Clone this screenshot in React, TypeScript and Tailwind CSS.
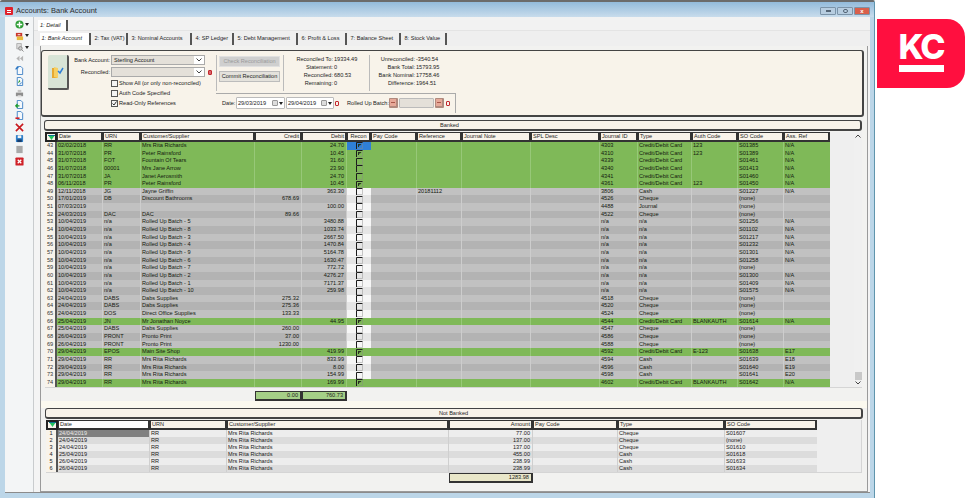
import React from 'react';

type BankedRow = {
  no: number; date: string; urn?: string; name?: string; credit?: string; debit?: string;
  recon?: boolean; ref?: string; jid: string; type: string; auth?: string; so: string; ass?: string; banked?: boolean;
};

const card = 'Credit/Debit Card';

const bankedRows: BankedRow[] = [
  { no: 43, date: '02/02/2018', urn: 'RR', name: 'Mrs Rita Richards', debit: '24.70', recon: true, jid: '4303', type: card, auth: '123', so: 'S01385', ass: 'N/A', banked: true },
  { no: 44, date: '31/07/2018', urn: 'PR', name: 'Peter Rainsford', debit: '10.45', recon: true, jid: '4310', type: card, auth: '123', so: 'S01389', ass: 'N/A', banked: true },
  { no: 45, date: '31/07/2018', urn: 'FOT', name: 'Fountain Of Tears', debit: '31.60', jid: '4339', type: card, so: 'S01461', ass: 'N/A', banked: true },
  { no: 46, date: '31/07/2018', urn: '00001', name: 'Mrs Jane Arrow', debit: '23.90', jid: '4340', type: card, so: 'S01413', ass: 'N/A', banked: true },
  { no: 47, date: '31/07/2018', urn: 'JA', name: 'Janet Aerosmith', debit: '24.70', jid: '4341', type: card, so: 'S01460', ass: 'N/A', banked: true },
  { no: 48, date: '06/11/2018', urn: 'PR', name: 'Peter Rainsford', debit: '10.45', recon: true, jid: '4361', type: card, auth: '123', so: 'S01450', ass: 'N/A', banked: true },
  { no: 49, date: '12/11/2018', urn: 'JG', name: 'Jayne Griffin', debit: '363.30', ref: '20181112', jid: '3806', type: 'Cash', so: 'S01227', ass: 'N/A' },
  { no: 50, date: '17/01/2019', urn: 'DB', name: 'Discount Bathrooms', credit: '678.69', jid: '4526', type: 'Cheque', so: '(none)' },
  { no: 51, date: '07/03/2019', debit: '100.00', jid: '4488', type: 'Journal', so: '(none)' },
  { no: 52, date: '24/03/2019', urn: 'DAC', name: 'DAC', credit: '89.66', jid: '4522', type: 'Cheque', so: '(none)' },
  { no: 53, date: '10/04/2019', urn: 'n/a', name: 'Rolled Up Batch - 5', debit: '3480.88', jid: 'n/a', type: 'n/a', so: 'S01256', ass: 'N/A' },
  { no: 54, date: '10/04/2019', urn: 'n/a', name: 'Rolled Up Batch - 8', debit: '1033.74', jid: 'n/a', type: 'n/a', so: 'S01102', ass: 'N/A' },
  { no: 55, date: '10/04/2019', urn: 'n/a', name: 'Rolled Up Batch - 3', debit: '2667.50', jid: 'n/a', type: 'n/a', so: 'S01217', ass: 'N/A' },
  { no: 56, date: '10/04/2019', urn: 'n/a', name: 'Rolled Up Batch - 4', debit: '1470.84', jid: 'n/a', type: 'n/a', so: 'S01232', ass: 'N/A' },
  { no: 57, date: '10/04/2019', urn: 'n/a', name: 'Rolled Up Batch - 9', debit: '5164.78', jid: 'n/a', type: 'n/a', so: 'S01301', ass: 'N/A' },
  { no: 58, date: '10/04/2019', urn: 'n/a', name: 'Rolled Up Batch - 6', debit: '1630.47', jid: 'n/a', type: 'n/a', so: 'S01258', ass: 'N/A' },
  { no: 59, date: '10/04/2019', urn: 'n/a', name: 'Rolled Up Batch - 7', debit: '772.72', jid: 'n/a', type: 'n/a', so: '(none)' },
  { no: 60, date: '10/04/2019', urn: 'n/a', name: 'Rolled Up Batch - 2', debit: '4276.27', jid: 'n/a', type: 'n/a', so: 'S01300', ass: 'N/A' },
  { no: 61, date: '10/04/2019', urn: 'n/a', name: 'Rolled Up Batch - 1', debit: '7171.37', jid: 'n/a', type: 'n/a', so: 'S01409', ass: 'N/A' },
  { no: 62, date: '10/04/2019', urn: 'n/a', name: 'Rolled Up Batch - 10', debit: '259.98', jid: 'n/a', type: 'n/a', so: 'S01575', ass: 'N/A' },
  { no: 63, date: '24/04/2019', urn: 'DABS', name: 'Dabs Supplies', credit: '275.32', jid: '4518', type: 'Cheque', so: '(none)' },
  { no: 64, date: '24/04/2019', urn: 'DABS', name: 'Dabs Supplies', credit: '275.36', jid: '4520', type: 'Cheque', so: '(none)' },
  { no: 65, date: '24/04/2019', urn: 'DOS', name: 'Direct Office Supplies', credit: '133.33', jid: '4524', type: 'Cheque', so: '(none)' },
  { no: 66, date: '25/04/2019', urn: 'JN', name: 'Mr Jonathan Noyce', debit: '44.95', recon: true, jid: '4544', type: card, auth: 'BLANKAUTH', so: 'S01614', ass: 'N/A', banked: true },
  { no: 67, date: '25/04/2019', urn: 'DABS', name: 'Dabs Supplies', credit: '260.00', jid: '4547', type: 'Cheque', so: '(none)' },
  { no: 68, date: '26/04/2019', urn: 'PRONT', name: 'Pronto Print', credit: '37.00', jid: '4586', type: 'Cheque', so: '(none)' },
  { no: 69, date: '26/04/2019', urn: 'PRONT', name: 'Pronto Print', credit: '1230.00', jid: '4588', type: 'Cheque', so: '(none)' },
  { no: 70, date: '29/04/2019', urn: 'EPOS', name: 'Main Site Shop', debit: '419.99', recon: true, jid: '4592', type: card, auth: 'E-123', so: 'S01638', ass: 'E17', banked: true },
  { no: 71, date: '29/04/2019', urn: 'RR', name: 'Mrs Rita Richards', debit: '833.99', jid: '4594', type: 'Cash', so: 'S01639', ass: 'E18' },
  { no: 72, date: '29/04/2019', urn: 'RR', name: 'Mrs Rita Richards', debit: '8.00', jid: '4596', type: 'Cash', so: 'S01640', ass: 'E19' },
  { no: 73, date: '29/04/2019', urn: 'RR', name: 'Mrs Rita Richards', debit: '154.99', jid: '4598', type: 'Cash', so: 'S01641', ass: 'E20' },
  { no: 74, date: '29/04/2019', urn: 'RR', name: 'Mrs Rita Richards', debit: '169.99', recon: true, jid: '4602', type: card, auth: 'BLANKAUTH', so: 'S01642', ass: 'N/A', banked: true },
];

const notBanked = [
  ['24/04/2019', '77.00', 'Cheque', 'S01607'],
  ['24/04/2019', '137.00', 'Cheque', '(none)'],
  ['24/04/2019', '137.00', 'Cheque', 'S01610'],
  ['25/04/2019', '455.00', 'Cash', 'S01618'],
  ['26/04/2019', '238.99', 'Cash', 'S01633'],
  ['26/04/2019', '238.99', 'Cash', 'S01634'],
];

const bankedCols = 'grid w-[785px] grid-cols-[12px_46px_38px_114px_47px_45px_24px_46px_45px_69px_69px_38px_54px_46px_46px_46px]';
const notBankedCols = 'grid w-[771px] grid-cols-[12px_92px_77px_222px_84px_85px_107px_92px]';

const topTabs = [
  ['1: Bank Account', 'w-[51px]'],
  ['2: Tax (VAT)', 'w-[35px]'],
  ['3: Nominal Accounts', 'w-[62px]'],
  ['4: SP Ledger', 'w-[40px]'],
  ['5: Debt Management', 'w-[62px]'],
  ['6: Profit & Loss', 'w-[47px]'],
  ['7: Balance Sheet', 'w-[52px]'],
  ['8: Stock Value', 'w-[44px]'],
];

const SortArrow = () => (
  <svg width="7" height="5" viewBox="0 0 7 5"><path d="M0 0h7L3.5 5z" fill="#22c55e" /><path d="M0 0h7v1H0z" fill="#0e7490" /></svg>
);

const HeadCell = ({ label, right, white, center }: { label?: string; right?: boolean; white?: boolean; center?: boolean }) => (
  <div className={`h-full border border-r-2 border-b-2 border-[#333] ${white ? 'bg-white' : 'bg-[#f8f3ea]'} px-px truncate leading-[7px] ${right ? 'text-right' : ''} ${center ? 'text-center' : ''}`}>
    {label}
  </div>
);

const SelectorHead = () => (
  <div className="h-full border-2 border-[#222] bg-[#f8f3ea] flex items-center justify-center"><SortArrow /></div>
);

const Tick = ({ on }: { on?: boolean }) => (
  <svg width="7" height="7" viewBox="0 0 7 7" className="block">
    <path d="M6.500 1V6.500H1" fill="none" stroke="#8a8a8a" strokeOpacity=".45" strokeWidth="1" />
    <path d="M.5 7V.5H6.500" fill="none" stroke="#1c1c1c" strokeWidth="1" />
    {on && <path d="M2 2h3.500L4 3.500H3V5H2z" fill="#26331f" />}
  </svg>
);

const Cell = ({ children, right, sep }: { children?: React.ReactNode; right?: boolean; sep: string }) => (
  <div className={`h-full border-r ${sep} px-px overflow-hidden whitespace-nowrap leading-[7.65px] ${right ? 'text-right pr-[2px]' : ''}`}>{children}</div>
);

const Row = ({ row }: { row: BankedRow }) => {
  const odd = row.no % 2 === 1;
  const bg = row.banked ? 'bg-[#7fb958]' : odd ? 'bg-[#c1c1c1]' : 'bg-[#b3b3b3]';
  const sep = row.banked ? 'border-[#97c878]' : 'border-[#cdcdcd]';
  const reconBg = row.no === 43 ? 'bg-[#2f7fd6]' : row.banked ? '' : odd ? 'bg-[#f6f6f6]' : 'bg-[#e5e5e5]';
  return (
    <div className={`${bankedCols} h-[7.65px] ${bg} text-[#14190f]`}>
      <div className="h-full bg-[#f8f3ea] border-r-2 border-[#555] text-center leading-[7.65px] text-[#333]">{row.no}</div>
      <Cell sep={sep}>{row.date}</Cell>
      <Cell sep={sep}>{row.urn}</Cell>
      <Cell sep={sep}>{row.name}</Cell>
      <Cell sep={sep} right>{row.credit}</Cell>
      <Cell sep={sep} right>{row.debit}</Cell>
      <div className={`h-full flex items-center justify-center ${reconBg}`}><Tick on={row.recon} /></div>
      <Cell sep={sep} />
      <Cell sep={sep}>{row.ref}</Cell>
      <Cell sep={sep} />
      <Cell sep={sep} />
      <Cell sep={sep}>{row.jid}</Cell>
      <Cell sep={sep}>{row.type}</Cell>
      <Cell sep={sep}>{row.auth}</Cell>
      <Cell sep={sep}>{row.so}</Cell>
      <Cell sep="border-transparent">{row.ass}</Cell>
    </div>
  );
};

const SectionBar = ({ label, className }: { label: string; className: string }) => (
  <div className={`h-[11px] w-[818px] rounded-[3px] border border-r-2 border-b-2 border-[#444] bg-[#f8f3ea] text-center leading-[8px] ${className}`}>{label}</div>
);

const Select = ({ value }: { value?: string }) => (
  <div className="h-[10px] w-[94px] flex items-center border border-[#aaa] bg-[#e4e0d9]">
    <span className="flex-1 pl-[2px] leading-[8px]">{value}</span>
    <span className="w-[10px] h-full bg-white flex items-center justify-center">
      <svg width="6" height="4" viewBox="0 0 6 4"><path d="M.5.5 3 3 5.500.5" fill="none" stroke="#444" strokeWidth="1" /></svg>
    </span>
  </div>
);

const CheckRow = ({ label, checked }: { label: string; checked?: boolean }) => (
  <div className="h-[10px] flex items-center gap-px">
    <span className="w-[7px] h-[7px] border border-[#555] bg-[#f4f4f4] flex items-center justify-center">
      {checked && <svg width="5" height="5" viewBox="0 0 5 5"><path d="M.5 2.500 2 4 4.500.5" fill="none" stroke="#333" strokeWidth="1" /></svg>}
    </span>
    <span>{label}</span>
  </div>
);

const DateBox = ({ value, className }: { value: string; className: string }) => (
  <div className={`h-[12px] flex items-center justify-between rounded-[1px] border border-[#bbb] bg-white pl-px ${className}`}>
    <span>{value}</span>
    <span className="flex items-center gap-px pr-px">
      <span className="w-[6px] h-[6px] rounded-[1px] border border-[#999] bg-[#ddd]" />
      <svg width="4" height="3" viewBox="0 0 4 3"><path d="M0 0h4L2 3z" fill="#222" /></svg>
    </span>
  </div>
);

const RedZero = ({ className }: { className: string }) => (
  <span className={`w-[4px] h-[5px] rounded-[1px] border border-[#c2272d] ${className}`} />
);

const BatchButton = () => (
  <span className="w-[9px] h-[10px] rounded-[1px] bg-[#e6a999] border border-[#b08a7e] border-b-2 border-r-2 flex items-center justify-center">
    <span className="w-[4px] h-px bg-[#a8584a]" />
  </span>
);

const ToolIcon = ({ children, arrow }: { children: React.ReactNode; arrow?: boolean }) => (
  <div className="h-[11.4px] flex items-center justify-center relative w-full">
    <svg width="9" height="9" viewBox="0 0 10 10">{children}</svg>
    {arrow && (
      <svg width="4" height="3" viewBox="0 0 4 3" className="absolute right-[4px] top-[4px]"><path d="M0 0h4L2 3z" fill="#222" /></svg>
    )}
  </div>
);

const Doc = ({ stroke = '#3b7fc4' }: { stroke?: string }) => (
  <path d="M2.500.5h4l2 2v7h-6z" fill="#f4f8fc" stroke={stroke} strokeWidth="1" />
);

const Toolbar = () => (
  <div className="w-[29px] pt-[2px] flex flex-col bg-[#f3f5f6] border-r border-[#c9ccce]">
    <ToolIcon arrow><circle cx="5" cy="5" r="4.500" fill="#2e9e36" /><path d="M5 2v6M2 5h6" stroke="#fff" strokeWidth="1.600" /></ToolIcon>
    <ToolIcon arrow><rect x="1" y="1" width="7" height="4" fill="#c9372c" /><rect x="2" y="5" width="7" height="4" fill="#e7b93a" /><path d="M3 3h3" stroke="#fff" /></ToolIcon>
    <ToolIcon arrow><path d="M2 .5h5v6H2z" fill="#ddd" stroke="#aaa" /><circle cx="6" cy="6" r="2" fill="#ccc" stroke="#888" /><path d="M7.500 7.500 9.500 9.500" stroke="#888" /></ToolIcon>
    <ToolIcon><path d="M5 2 1.500 5 5 8zM9 2 5.500 5 9 8z" fill="#b5b5b5" /></ToolIcon>
    <ToolIcon><Doc /><path d="M1 4c0-2 2-2.500 3-2" fill="none" stroke="#1f6fc0" strokeWidth="1.300" /></ToolIcon>
    <ToolIcon><Doc /><path d="M3 7 5 3l1 2z" fill="#2e9e36" /><path d="M5 8c1 0 2-1 2-2" fill="none" stroke="#1f6fc0" /></ToolIcon>
    <ToolIcon><rect x="1" y="4" width="8" height="4" fill="#8e8e8e" /><rect x="3" y="1" width="4" height="3" fill="#c4c4c4" /><rect x="3" y="7" width="4" height="2.500" fill="#e2e2e2" /></ToolIcon>
    <ToolIcon><Doc /><path d="M5 6.500H1M2.800 4.500 .8 6.500l2 2" fill="none" stroke="#1e9c2e" strokeWidth="1.400" /></ToolIcon>
    <ToolIcon><Doc /><path d="M.5 8h4.500" stroke="#d11f26" strokeWidth="1.800" /></ToolIcon>
    <ToolIcon><path d="M1 1l8 8M9 1 1 9" stroke="#c8191f" strokeWidth="1.800" /></ToolIcon>
    <ToolIcon><rect x="1" y="1" width="8" height="8" rx="1" fill="#2f7fc8" /><rect x="3" y="1.500" width="4" height="3" fill="#f2f2f2" /><rect x="2.500" y="6" width="5" height="3" fill="#173f70" /></ToolIcon>
    <ToolIcon><rect x="1.500" y="1" width="7" height="8" fill="#a9a9a9" /></ToolIcon>
    <ToolIcon><rect x=".5" y=".5" width="9" height="9" rx="1" fill="#cf2128" /><path d="M3 3l4 4M7 3 3 7" stroke="#fff" strokeWidth="1.400" /></ToolIcon>
  </div>
);

const WindowButton = ({ tone, children }: { tone: string; children: React.ReactNode }) => (
  <div className={`w-[16px] h-[8px] rounded-[1px] border border-[#7b93a8] flex items-center justify-center ${tone}`}>{children}</div>
);

const FilterPanel = () => (
  <div className="h-[67px] w-[823px] flex rounded-[3px] border border-r-2 border-b-2 border-[#444] bg-[#f8f3ea] text-[#222]">
    <div className="w-[27px] pl-[6px] pt-[4px]">
      <div className="w-[21px] h-[35px] bg-[#d8e4d6] border-r-2 border-b-2 border-[#555] rounded-[2px] flex items-center justify-center">
        <svg width="13" height="14" viewBox="0 0 13 14">
          <path d="M1 3h4l1 1v9H1z" fill="#e8a92f" />
          <path d="M3 2l4 1v10l-4-1z" fill="#f6cf63" />
          <path d="M7 6l2 2 3-5" fill="none" stroke="#2f7fd6" strokeWidth="1.500" />
        </svg>
      </div>
    </div>
    <div className="w-[147px] pt-[4px] flex flex-col">
      <div className="flex items-center">
        <span className="w-[42px] text-right pr-px whitespace-nowrap">Bank Account:</span>
        <Select value="Sterling Account" />
      </div>
      <div className="flex items-center mt-[2px]">
        <span className="w-[42px] text-right pr-px">Reconciled:</span>
        <Select />
        <RedZero className="ml-[3px] bg-[#d9646a]" />
      </div>
      <div className="ml-[42px] mt-px flex flex-col">
        <CheckRow label="Show All (or only non-reconciled)" />
        <CheckRow label="Auth Code Specified" />
        <CheckRow label="Read-Only References" checked />
      </div>
    </div>
    <div className="w-[240px] flex flex-col">
      <div className="pt-[4px] pb-[2px] border-b border-[#aaa] flex h-[43px]">
        <div className="w-[67px] border-l border-[#bbb] pl-[2px] pt-px flex flex-col gap-[4px]">
          <div className="w-[61px] h-[11px] bg-[#cfcfcf] border border-[#e0e0e0] text-center leading-[9px] text-[#9a9a9a]">Check Reconciliation</div>
          <div className="w-[61px] h-[11px] bg-[#e4e2dc] border border-[#bcbcbc] text-center leading-[9px]">Commit Reconciliation</div>
        </div>
        <div className="w-[86px] border-l border-[#bbb] grid grid-cols-[49px_1fr] auto-rows-[8px] gap-x-px leading-[8px]">
          <span className="text-right">Reconciled To:</span><span>19334.49</span>
          <span className="text-right">Statement:</span><span>0</span>
          <span className="text-right">Reconciled:</span><span>680.53</span>
          <span className="text-right">Remaining:</span><span>0</span>
        </div>
        <div className="flex-1 border-l border-[#bbb] grid grid-cols-[45px_1fr] auto-rows-[8px] gap-x-px leading-[8px]">
          <span className="text-right">Unreconciled:</span><span>-3540.54</span>
          <span className="text-right">Bank Total:</span><span>15793.95</span>
          <span className="text-right whitespace-nowrap">Bank Nominal:</span><span>17758.46</span>
          <span className="text-right">Difference:</span><span>1964.51</span>
        </div>
      </div>
      <div className="h-[19px] border-r border-[#aaa] flex items-center pl-[6px] pb-px">
        <span className="w-[14px]">Date:</span>
        <DateBox value="29/03/2019" className="w-[49px]" />
        <DateBox value="29/04/2019" className="w-[48px] ml-px" />
        <RedZero className="ml-px" />
        <span className="ml-[8px] w-[42px] whitespace-nowrap">Rolled Up Batch:</span>
        <BatchButton />
        <div className="w-[35px] h-[10px] bg-[#e4e0d9] border border-[#bbb] rounded-[1px] mx-px" />
        <BatchButton />
        <RedZero className="ml-[2px]" />
      </div>
    </div>
  </div>
);

const BankedGrid = () => (
  <div className="ml-[4px] w-[817px] flex bg-[#efefef] border-b border-[#d5d5d5]">
    <div className="w-[785px]">
      <div className={`${bankedCols} h-[10px]`}>
        <SelectorHead />
        <HeadCell label="Date" />
        <HeadCell label="URN" />
        <HeadCell label="Customer/Supplier" />
        <HeadCell label="Credit" right />
        <HeadCell label="Debit" right />
        <HeadCell label="Recon" center />
        <HeadCell label="Pay Code" />
        <HeadCell label="Reference" />
        <HeadCell label="Journal Note" />
        <HeadCell label="SPL Desc" />
        <HeadCell label="Journal ID" />
        <HeadCell label="Type" />
        <HeadCell label="Auth Code" />
        <HeadCell label="SO Code" />
        <HeadCell label="Ass. Ref" />
      </div>
      {bankedRows.map((row) => <Row key={row.no} row={row} />)}
    </div>
    <div className="w-[24px]" />
    <div className="w-[8px] flex flex-col items-center justify-between py-[2px] bg-[#f0f0f0]">
      <svg width="6" height="4" viewBox="0 0 6 4"><path d="M.5 3.500 3 1l2.500 2.500" fill="none" stroke="#444" /></svg>
      <div className="flex flex-col items-center gap-px">
        <div className="w-[7px] h-[8px] bg-[#c8c8c8]" />
        <svg width="6" height="4" viewBox="0 0 6 4"><path d="M.5.5 3 3 5.500.5" fill="none" stroke="#444" /></svg>
      </div>
    </div>
  </div>
);

const NotBankedGrid = () => (
  <div className="ml-[5px] w-[816px] bg-[#efefef] border-r border-b border-[#d5d5d5]">
    <div className={`${notBankedCols} h-[10px]`}>
      <SelectorHead />
      <HeadCell label="Date" white />
      <HeadCell label="URN" />
      <HeadCell label="Customer/Supplier" />
      <HeadCell label="Amount" right />
      <HeadCell label="Pay Code" />
      <HeadCell label="Type" />
      <HeadCell label="SO Code" />
    </div>
    {notBanked.map((r, i) => (
      <div key={i} className={`${notBankedCols} h-[7.13px] leading-[7.13px] text-[#1a1a1a] ${i % 2 === 0 ? 'bg-[#ededed]' : 'bg-[#dcdcdc]'}`}>
        <div className="h-full bg-[#f8f3ea] border-r-2 border-[#555] text-center">{i + 1}</div>
        <div className={`h-full px-px border-r border-[#cfcfcf] ${i === 0 ? 'bg-[#808080] text-[#e8e8e8]' : ''}`}>{r[0]}</div>
        <div className="h-full px-px border-r border-[#cfcfcf]">RR</div>
        <div className="h-full px-px border-r border-[#cfcfcf]">Mrs Rita Richards</div>
        <div className="h-full pr-[2px] text-right border-r border-[#cfcfcf]">{r[1]}</div>
        <div className="h-full border-r border-[#cfcfcf]" />
        <div className="h-full px-px border-r border-[#cfcfcf]">{r[2]}</div>
        <div className="h-full px-px">{r[3]}</div>
      </div>
    ))}
  </div>
);

export default function App() {
  return (
    <div className="w-[965px] h-[500px] flex items-start bg-white overflow-hidden font-['Liberation_Sans',sans-serif] text-[5.6px] text-[#1e1e1e]">
      <div className="w-[875px] h-[498px] flex flex-col border-t-2 border-[#6b6b6b] border-r border-r-[#5f95ad] bg-[#bcd6e8] rounded-t-[2px]">
        <div className="h-[15px] flex items-center pt-[3px] pl-[5px] pr-[4px] bg-linear-to-b from-[#93bbdb] to-[#c8dcec]">
          <div className="w-[8px] h-[8px] rounded-[1px] bg-[#e0222c] mr-[3px] flex items-center justify-center">
            <div className="w-[4px] h-[3px] border-y border-white" />
          </div>
          <span className="flex-1 text-[7.5px] text-[#2f2f2f]">Accounts: Bank Account</span>
          <div className="flex gap-px">
            <WindowButton tone="bg-[#b7cde0]"><span className="w-[5px] h-[2px] border border-[#567]" /></WindowButton>
            <WindowButton tone="bg-[#b7cde0]"><span className="w-[5px] h-[4px] rounded-full border border-[#567]" /></WindowButton>
            <WindowButton tone="bg-[#d9604c]"><span className="text-white text-[6px] leading-none font-bold">x</span></WindowButton>
          </div>
        </div>
        <div className="h-[476px] ml-[5px] mr-[4px] flex border-b border-[#8b8b8b] bg-[#f4f4f4]">
          <Toolbar />
          <div className="flex-1 flex flex-col min-w-0">
            <div className="h-[14px] pl-[4px] pt-[3px] bg-[#f2f2f2] flex border-b border-[#e4e4e4]">
              <div className="w-[30px] h-[11px] bg-white border-r-2 border-[#555] italic pl-[2px] leading-[10px]">1: Detail</div>
            </div>
            <div className="h-[15px] pl-[6px] pt-[2px] bg-[#efefef] flex items-stretch gap-[2px]">
              {topTabs.map(([label, width], i) => (
                <div key={label} className={`${width} border-r-2 border-[#555] pl-[1.5px] h-[12px] leading-[11px] whitespace-nowrap ${i === 0 ? 'bg-white italic' : ''}`}>{label}</div>
              ))}
            </div>
            <div className="flex-1 ml-[6px] mr-[2px] pt-[4px] border-l border-r border-b border-[#9a9a9a] bg-[#f2f2f0]">
              <FilterPanel />
              <SectionBar label="Banked" className="ml-[3px] mt-[3px] mb-px pr-[6px]" />
              <BankedGrid />
              <div className={`${bankedCols} ml-[4px] h-[10px] mt-[3px]`}>
                <div className="col-start-5 h-full border border-r-2 border-b-2 border-[#333] bg-[#a5cf87] text-right pr-[2px] leading-[7px]">0.00</div>
                <div className="col-start-6 h-full border border-r-2 border-b-2 border-[#333] bg-[#a5cf87] text-right pr-[2px] leading-[7px]">760.73</div>
              </div>
              <div className="h-[7px] bg-[#fbf9ef]" />
              <SectionBar label="Not Banked" className="ml-[4px] mb-px" />
              <NotBankedGrid />
              <div className={`${notBankedCols} ml-[5px] h-[10px]`}>
                <div className="col-start-5 h-full border border-r-2 border-b-2 border-[#333] bg-[#e9e7c9] text-right pr-[2px] leading-[7px]">1283.98</div>
              </div>
            </div>
          </div>
        </div>
      </div>
      <div className="ml-[2px] mt-[19px] w-[88px] h-[69px] rounded-r-[18px] bg-[#ff0f3f] flex flex-col items-center pt-[13px]">
        <span className="font-['Inter',sans-serif] font-extrabold text-[34px] leading-[30px] tracking-[-2px] text-white">KC</span>
        <span className="w-[45px] h-[7px] bg-white mt-[3px]" />
      </div>
    </div>
  );
}
